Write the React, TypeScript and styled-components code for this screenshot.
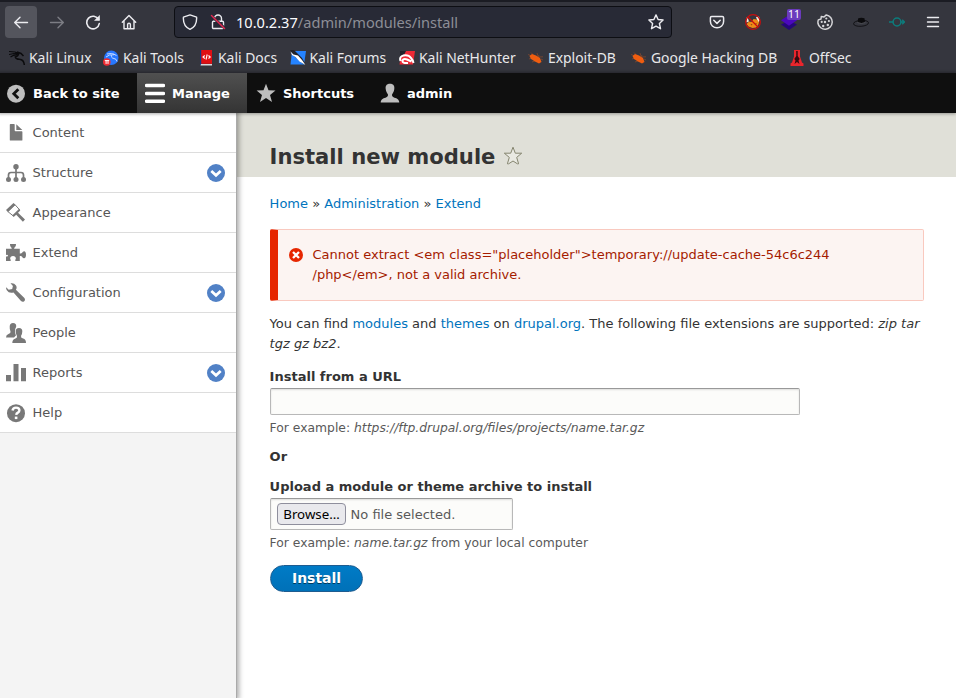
import React from 'react';
import styled, { createGlobalStyle } from 'styled-components';

const GlobalStyle = createGlobalStyle`
  *, *::before, *::after { box-sizing: border-box; }
  body { margin: 0; background: #fff; overflow: hidden; }
  svg { display: block; flex: none; }
`;

const Page = styled.div`
  display: flex;
  flex-direction: column;
  width: 956px;
  height: 698px;
  font: 13px/20px "DejaVu Sans", sans-serif;
  color: #333;
`;

/* ---------- browser chrome ---------- */

const Chrome = styled.header`
  flex: none;
  height: 73px;
  border-top: 2px solid #1b1c23;
  background: #35363e;
  font-family: "Noto Sans", sans-serif;
  color: #e9e9eb;
`;

const NavBar = styled.div`
  display: flex;
  align-items: center;
  height: 40px;
  padding-left: 5px;
`;

const NavButton = styled.div<{ $active?: boolean }>`
  display: grid;
  place-items: center;
  flex: none;
  width: 32px;
  height: 32px;
  margin-right: 4px;
  border-radius: 4px;
  background: ${(p) => (p.$active ? '#54555d' : 'transparent')};
`;

const AddressBar = styled.div`
  display: flex;
  align-items: center;
  flex: none;
  width: 498px;
  height: 32px;
  margin: 0 29px 0 25px;
  padding: 0 6px;
  border: 1px solid #0d0e13;
  border-radius: 4px;
  background: #282a36;
`;

const AddressIcon = styled.span`
  display: grid;
  place-items: center;
  width: 18px;
  margin-right: 10px;
  &:last-child { margin: 0; }
`;

const Url = styled.span`
  flex: 1;
  margin-left: -1px;
  font-size: 14.6px;
  line-height: 20px;
  color: #8d8e97;
  b { font-weight: 400; color: #fbfbfe; }
`;

const Extension = styled.div`
  position: relative;
  display: grid;
  place-items: center;
  flex: none;
  width: 32px;
  height: 32px;
  margin-right: 4px;
`;

const CountBadge = styled.span`
  position: absolute;
  top: 3px;
  left: 14px;
  width: 14px;
  height: 11px;
  border-radius: 2px;
  background: #6b3bbd;
  color: #fff;
  font-size: 10.5px;
  line-height: 11px;
  text-align: center;
`;

const Bookmarks = styled.nav`
  display: flex;
  align-items: center;
  gap: 12px;
  height: 31px;
  padding: 1px 0 0 9px;
`;

const Bookmark = styled.a<{ $width: number }>`
  display: flex;
  align-items: center;
  gap: 4px;
  width: ${(p) => p.$width}px;
  flex: none;
  font-size: 13.9px;
  line-height: 20px;
  white-space: nowrap;
`;

/* ---------- admin toolbar ---------- */

const AdminBar = styled.nav`
  display: flex;
  flex: none;
  height: 40px;
  background: #0f0f0f;
  color: #fff;
  font-weight: 700;
  position: relative;
  z-index: 2;
  box-shadow: -1px 0 3px 1px rgba(0, 0, 0, 0.333);
`;

const AdminTab = styled.a<{ $width: number; $inset?: number; $active?: boolean }>`
  display: flex;
  align-items: center;
  gap: 7px;
  width: ${(p) => p.$width}px;
  padding-left: ${(p) => p.$inset ?? 6}px;
  background: ${(p) => (p.$active ? 'linear-gradient(#505050, #343434)' : 'none')};
  span { padding-top: 2px; }
`;

const Body = styled.div`
  display: flex;
  flex: 1;
  min-height: 0;
`;

const Tray = styled.aside`
  flex: none;
  width: 237px;
  border-right: 1px solid #aaa;
  background: #f4f4f4;
  box-shadow: 0 0 5px 2px rgba(0, 0, 0, 0.333);
  z-index: 1;
`;

const TrayItem = styled.a`
  display: flex;
  align-items: center;
  gap: 6.6px;
  height: 40px;
  padding: 0 11px 0 6px;
  border-bottom: 1px solid #ddd;
  background: #fff;
  color: #565656;
  span { flex: 1; }
`;

/* ---------- content ---------- */

const Main = styled.main`
  flex: 1;
  min-width: 0;
`;

const TitleBar = styled.div`
  display: flex;
  align-items: center;
  gap: 8px;
  height: 64px;
  padding: 22px 0 0 32.6px;
  background: #e0e0d8;
`;

const Title = styled.h1`
  margin: 0;
  padding-top: 2px;
  font-size: 21.1px;
  line-height: 30px;
  font-weight: 700;
`;

const Content = styled.div`
  padding: 17px 32px 0 33px;
`;

const Breadcrumb = styled.nav`
  margin-left: -0.4px;
`;

const Link = styled.a`
  color: #0074bd;
`;

const ErrorMessage = styled.div`
  display: flex;
  gap: 9px;
  width: 654px;
  height: 72px;
  margin-top: 15px;
  padding: 15px 20px 0 11px;
  border: 1px solid #f9c9bf;
  border-left: 8px solid #e62600;
  border-radius: 2px;
  background: #fcf4f2;
  color: #a51b00;
`;

const Intro = styled.p`
  margin: 13px 0 13px -0.4px;
`;

const Label = styled.div<{ $gap?: number }>`
  margin: ${(p) => p.$gap ?? 0}px 0 0 -0.4px;
  font-weight: 700;
`;

const Field = styled.div<{ $width: number; $height: number; $gap?: number }>`
  display: flex;
  align-items: center;
  gap: 4.6px;
  width: ${(p) => p.$width}px;
  height: ${(p) => p.$height}px;
  margin: 1px 0 ${(p) => p.$gap ?? 3}px;
  padding: 0 6px;
  border: 1px solid #b8b8b8;
  border-top-color: #999;
  border-radius: 2px;
  background: #fcfcfa;
  box-shadow: inset 0 1px 2px rgba(0, 0, 0, 0.125);
  color: #595959;
  span { padding-top: 1px; }
`;

const BrowseButton = styled.button`
  width: 69px;
  height: 22px;
  padding: 0;
  border: 1px solid #8f8f9d;
  border-radius: 4px;
  background: #e9e9ed;
  color: #000;
  font: 13.3px/18px "Noto Sans", sans-serif;
`;

const Hint = styled.div`
  margin-left: -0.4px;
  font-size: 12.35px;
  color: #595959;
`;

const InstallButton = styled.button`
  display: block;
  width: 93px;
  height: 27px;
  margin-top: 12px;
  padding: 0;
  border: 1px solid #1e5c90;
  border-radius: 20px;
  background: linear-gradient(#007bc6, #0071b8);
  color: #fff;
  font: 700 13.9px/23px "DejaVu Sans", sans-serif;
  text-shadow: 0 1px rgba(0, 0, 0, 0.5);
`;

/* ---------- icons ---------- */

const stroke = {
  fill: 'none',
  stroke: '#ececf0',
  strokeWidth: 1.4,
  strokeLinecap: 'round' as const,
  strokeLinejoin: 'round' as const,
};

const Icon = ({ size = 16, children }: { size?: number; children: React.ReactNode }) => (
  <svg width={size} height={size} viewBox={`0 0 ${size} ${size}`}>{children}</svg>
);

const BackIcon = () => <Icon><path {...stroke} d="M14.5 8.500H1.8M7 3.3 1.7 8.500 7 13.7" /></Icon>;
const ForwardIcon = () => <Icon><path {...stroke} stroke="#7c7d84" d="M1.5 8.500h12.7M9 3.3 14.3 8.500 9 13.7" /></Icon>;
const ReloadIcon = () => (
  <Icon>
    <path {...stroke} strokeWidth="1.600" d="M13.6 5.500A6.3 6.3 0 1 0 14.3 9.500" />
    <path fill="#ececf0" d="M14.8 1v5.8H9z" />
  </Icon>
);
const HomeIcon = () => (
  <Icon><path {...stroke} d="M1.300 8.300 8 1.600 14.700 8.300M3 7v7.700h10V7M6.600 14.500V10.500q0-1.200 1.400-1.200t1.400 1.200v4" /></Icon>
);
const ShieldIcon = () => (
  <Icon><path {...stroke} d="M8 .9 14.600 3.200c.3 5-1.500 9.800-6.600 12.100C2.900 13 1.100 8.200 1.400 3.200z" /></Icon>
);
const LockIcon = () => (
  <Icon>
    <path {...stroke} d="M4.500 7V4.500a3.500 3.500 0 0 1 7 0V7M3.500 7.200h9a1 1 0 0 1 1 1v5.300a1 1 0 0 1-1 1h-9a1 1 0 0 1-1-1V8.200a1 1 0 0 1 1-1z" />
    <path stroke="#282a36" strokeWidth="3" d="M2 2.500 14.500 14" />
    <path stroke="#e22850" strokeWidth="1.500" strokeLinecap="round" d="M1.500 1.500 14.500 14.500" />
  </Icon>
);
const BookmarkStar = () => (
  <Icon><path {...stroke} d="M8 .9l2.100 4.600 5 .5-3.700 3.500 1.100 5.200L8 12.100l-4.500 2.600 1.100-5.200L.9 6l5-.5z" /></Icon>
);
const PocketIcon = () => (
  <Icon>
    <path {...stroke} strokeWidth="1.500" d="M2.700 2.500h10.600q1.300 0 1.300 1.300V7.500a6.600 6.300 0 0 1-13.200 0V3.800q0-1.300 1.300-1.300zM4.800 6.300 8 9.400l3.200-3.100" />
  </Icon>
);
const FoxIcon = () => (
  <Icon>
    <path fill="#f5ead8" d="m1 3.500 2 1 1 3-2.500 1zM11 3l3-.500 1 4-2 2z" />
    <path fill="#ef8a18" d="m4 7.500 2.500.500L8.500 5l3.500.5 2 3-1 3L11 13.500l-3.500 .5-4-1.500L1.500 10z" />
    <path fill="#7d3c13" d="m5.500 10 2 .5-1 1zM10.500 9l1.500 .5-1.500 1z" />
    <circle cx="8" cy="8" r="7.300" fill="none" stroke="#c90d0d" strokeWidth="1.300" />
    <path d="m3 3 10 10" stroke="#c90d0d" strokeWidth="1.300" />
  </Icon>
);
const LayersIcon = () => (
  <Icon>
    <path fill="#25077a" d="m0 10.500 8-4 8 4L8 16z" />
    <path fill="#4b08bd" d="M0 6.300 8 1l8 5.300-8 5.500z" />
  </Icon>
);
const CookieIcon = () => (
  <Icon>
    <path {...stroke} strokeWidth="1.500" stroke="#d5d5d8" d="M9.300.9A7.200 7.200 0 1 1 1 9.500C.8 8 .9 7 1.300 5.900L4 5l.3-2.500L7 3z" />
    <g fill="#d5d5d8">
      <circle cx="8" cy="8" r="1.200" /><circle cx="4.700" cy="7.900" r="1.100" /><circle cx="9.300" cy="4.500" r="1.100" />
      <circle cx="11.900" cy="7" r="1.100" /><circle cx="10.800" cy="11" r="1.200" /><circle cx="6.200" cy="12" r="1.200" />
    </g>
  </Icon>
);
const HatIcon = () => (
  <Icon>
    <ellipse cx="8" cy="9.300" rx="7.500" ry="3" fill="none" stroke="#0b0b0d" strokeWidth=".8" transform="rotate(-4 8 9)" />
    <path fill="#0b0b0d" d="M4.800 8.500 5 4.500q3-1.300 6.500-.2l.5 4.200q-3.500 2-7.200 0z" />
    <path stroke="#5b5c62" strokeWidth=".8" d="M4.500 8.500q4 2 7.800 0" fill="none" />
  </Icon>
);
const ProxyIcon = () => (
  <Icon>
    <circle cx="8" cy="8" r="3.900" fill="none" stroke="#0d7c7c" strokeWidth="1.500" />
    <path fill="none" stroke="#0d7c7c" strokeWidth="1.400" d="M0 8h4M12 8h3.500M13.200 5.800 15.400 8l-2.200 2.200" />
  </Icon>
);
const MenuIcon = () => <Icon><path {...stroke} d="M2.500 3.500h11M2.500 8h11M2.500 12.500h11" /></Icon>;

const KaliLinuxIcon = () => (
  <Icon>
    <path fill="none" stroke="#0b0b0d" strokeWidth="1.100" d="M0 1.500 6 2l3 1M0 4.500 5 3.500l4 .8M1.500 7Q5 4.500 8.500 5" />
    <path fill="none" stroke="#0b0b0d" strokeWidth="1.500" d="M6 3q4 0 3.500 1.500T6.300 7q.7 2.300 4 2.300 4.700.3 5 5.700M8 2l4 1.500 2.500 2.500" />
  </Icon>
);
const KaliToolsIcon = () => (
  <Icon>
    <circle cx="8.300" cy="7.800" r="7.200" fill="#2777ff" />
    <path fill="none" stroke="#d6e4ff" strokeWidth=".9" d="M4 4q5-1.500 7 1M3 7q4-3 6-2-1.500 3 2 3.500 2.500.2 3 3M9.500 3.500l4 2" />
    <circle cx="3.800" cy="12" r="3.800" fill="#f02a31" />
    <path stroke="#fff" strokeWidth="1" d="M1.800 10.600h4.400M3.100 10.600v3.300M5 10.600v3.300" />
  </Icon>
);
const KaliDocsIcon = () => (
  <Icon>
    <path fill="#123b80" d="M2 0h3v15H2z" />
    <path fill="#e00f14" d="M3.200 0H14v13.800H3.200z" />
    <path fill="#d8d8dc" d="M3 14h11v1.500H2.500z" />
    <path fill="none" stroke="#fff" strokeWidth="1.100" d="M6.800 5.500 5 7l1.800 1.500M9.200 4.500 8 9.500M10.500 5.500 12.200 7l-1.700 1.500" />
  </Icon>
);
const KaliForumsIcon = () => (
  <Icon>
    <path fill="#2583ff" d="M2 1h14l-2 13.500H.5z" />
    <path fill="#20222a" d="M0 0h4l8 8 4 7-4-2-9-8z" />
    <path fill="#fff" d="m.5 1.500 3 3L8 5.500l4 4.500 3.500 5-6-3.500-4-4.500L2 5z" />
  </Icon>
);
const NetHunterIcon = () => (
  <Icon>
    <path fill="#ee2935" d="M2.500 1H16l-2 13.500H.5z" />
    <path fill="#20222a" d="M1 1h6L5.500 4 1 7z" />
    <path fill="none" stroke="#fff" strokeWidth="2" d="M1.500 11Q0 6.500 4.500 5.500q5-1 7.500 2.500 2 2 2.500 5M9 13q-6 .5-5.500-2.500Q4.500 8.300 8 9.500l4.500 2" />
  </Icon>
);
const BugIcon = () => (
  <Icon>
    <path fill="none" stroke="#8b4a2b" strokeWidth=".7" d="M0 4.500 4 6M3 2.500l2 2M9 3 10 6M11 5l-1 2 5-.2M1 9l3-1M4 12l4-1.500M13 9l2 1" />
    <path fill="#ef5d10" d="M1.500 6 4 4l4 1.500 4 2.500 1.500 4-2.500 1.500-4-2L3 9z" />
  </Icon>
);
const OffSecIcon = () => (
  <Icon>
    <path fill="#e9252c" d="M5 0h6v6.500l2 6 1.500 1V16h-13v-2.500l1.500-1 2-6z" />
    <path fill="#350b10" d="M7.200 1h1.500v5l2 3-1.200 1.500 1 3.500L8 12l-2.500 2 1-3.500L5.300 9l2-3z" />
  </Icon>
);

const BackToSiteIcon = () => (
  <Icon size={20}>
    <circle cx="10" cy="10.700" r="9" fill="#bebebe" />
    <path d="M12.300 6.200 7.800 10.700l4.500 4.500" fill="none" stroke="#0f0f0f" strokeWidth="2.800" />
  </Icon>
);
const HamburgerIcon = () => (
  <Icon size={20}><path d="M1.500 2.500h17M1.500 10.500h17M1.500 18.200h17" stroke="#fff" strokeWidth="3.400" strokeLinecap="round" /></Icon>
);
const ShortcutIcon = () => (
  <Icon size={20}><path fill="#bebebe" d="m10 .8 2.500 6.500 7 .2-5.500 4.400 2 7.100-6-4-6 4 2-7.100L.6 7.500l6.900-.2z" /></Icon>
);
const UserIcon = () => (
  <Icon size={20}>
    <path fill="#bebebe" d="M10 .8c3.500 0 4.700 2.200 4.300 5.200-.3 2.500-1.200 3.800-2.200 5.300-.3 1.700.2 2.700 2.400 3.400 2.700.8 4.400 1.300 4.800 4.800H.700c.4-3.500 2.100-4 4.800-4.800 2.200-.7 2.700-1.700 2.400-3.400C6.900 9.800 6 8.500 5.700 6 5.300 3 6.500.8 10 .8z" />
  </Icon>
);

const grey = '#787878';
const FileIcon = () => (
  <Icon size={20}><path fill={grey} d="M4.500 1H8q.7 0 .7.700v5.800q0 .7.700.700h6.300q.7 0 .7.700v8q0 .7-.7.700H4.500q-.7 0-.7-.7V1.700q0-.7.700-.7zM10.300 1.200l6 5.900h-6z" /></Icon>
);
const StructureIcon = () => (
  <Icon size={20}>
    <path fill="none" stroke={grey} strokeWidth="1.700" d="M10 4v12M2.500 16v-4q0-2.500 2.500-2.500h10q2.500 0 2.500 2.500v4" />
    <g fill={grey}>
      <circle cx="10" cy="3.700" r="2.700" /><circle cx="2.500" cy="16.500" r="2.500" />
      <circle cx="10" cy="16.500" r="2.500" /><circle cx="17.500" cy="16.500" r="2.500" />
    </g>
  </Icon>
);
const AppearanceIcon = () => (
  <Icon size={20}>
    <path fill={grey} d="m7.500 0 2 1.800L2 9 0 7z" />
    <path fill="none" stroke={grey} strokeWidth="1" d="m9 1.700 4.600 5.100-6.500 6L1.800 8.500z" />
    <path fill={grey} d="m13.200 5.800 1.100 1.600L12 9.800l7 6.600-2.100 2.300-6.700-6.900-2.500 2.300-1.500-1.500z" />
  </Icon>
);
const ExtendIcon = () => (
  <Icon size={20}>
    <path fill={grey} d="M0 5.700h5.700Q5.900 4.700 4.800 3.900 3.900 3.200 4 .9h6q0 2.300-1 3-1 .8-.8 1.800h5.600v4.700q1.600.4 2.300-.6.7-1.500 2-1.500 1.900.2 1.900 3.400t-1.900 3.500q-1.300 0-2-1.500-.7-1-2.300-.6v5H9.500q-.6-1 .3-2 .3-3-2.800-3.100-3.100.1-2.800 3.100.9 1 .3 2H0v-4.700q1.800.6 2-.6 0-1.400-2-.8z" />
  </Icon>
);
const WrenchIcon = () => (
  <Icon size={20}>
    <path fill={grey} d="M4.500.300Q8-.5 10 2.500q1.300 2-.1 4.300l8.500 8.300q1.300 2-.2 3.200-1.600 1.200-3.200-.3L7.500 9.500Q3 10.800.8 7.300-.2 5.500.2 4.200l2.500 2.600 3.500-.700.700-3z" />
  </Icon>
);
const PeopleIcon = () => (
  <Icon size={20}>
    <path fill={grey} d="M7 0q3.500 0 3.200 3.700Q9 5 9.500 7.800q0 1.800 1.500 3.500l-3 3.200H0q0-3 2.500-3.600 2.500-.5 2-2.300Q3.500 6.500 3.700 3.500 3.800 0 7 0z" />
    <path fill={grey} stroke="#fff" strokeWidth="1.400" paintOrder="stroke" d="M13 5q3.500 0 3.300 3.500 0 2.300-1.300 4.500-.3 2 2.200 2.600Q20 16.300 20 20H6.300q0-3.500 2.700-4.300 2.500-.7 2-2.700-1.200-2.200-1.300-4.500Q9.500 5 13 5z" />
  </Icon>
);
const ReportsIcon = () => (
  <Icon size={20}><path fill={grey} d="M0 12h5v6.300H0zM7.500 1h5v17.300h-5zM15 5h5v13.300h-5z" /></Icon>
);
const HelpIcon = () => (
  <Icon size={20}>
    <circle cx="10" cy="10.200" r="9" fill={grey} />
    <path d="M6.500 7.500Q7 4.600 10 4.600q3.400 0 3.400 2.700 0 1.500-1.500 2.300-1.500.8-1.700 2.200" fill="none" stroke="#fff" strokeWidth="2.400" />
    <path fill="#fff" d="M8.800 13.600h2.600v2.500H8.800z" />
  </Icon>
);
const ExpandIcon = () => (
  <Icon size={18}>
    <circle cx="9" cy="9" r="9" fill="#5181c6" />
    <path d="m4.300 7 4.700 4.300L13.700 7" fill="none" stroke="#fff" strokeWidth="2.700" />
  </Icon>
);
const TitleStarIcon = () => (
  <Icon size={20}>
    <path fill="#e9e9e2" stroke="#85856f" strokeWidth="1" strokeLinejoin="round" d="m10 1.200 2.300 6h6.400l-5 4.200 1.900 6.400h-1.200L10 15l-4.400 2.800H4.400l1.900-6.400-5-4.200h6.400z" />
  </Icon>
);
const ErrorIcon = () => (
  <Icon size={14}>
    <circle cx="7" cy="7" r="7" fill="#e62600" />
    <path d="m4 4 6 6M10 4l-6 6" stroke="#fff" strokeWidth="2.300" />
  </Icon>
);

const ErrorIconSlot = styled.span`
  padding: 3px 0 0;
  margin-right: 0.5px;
`;

const bookmarks = [
  { label: 'Kali Linux', icon: KaliLinuxIcon, width: 82 },
  { label: 'Kali Tools', icon: KaliToolsIcon, width: 83 },
  { label: 'Kali Docs', icon: KaliDocsIcon, width: 79.5 },
  { label: 'Kali Forums', icon: KaliForumsIcon, width: 97.5 },
  { label: 'Kali NetHunter', icon: NetHunterIcon, width: 117 },
  { label: 'Exploit-DB', icon: BugIcon, width: 91 },
  { label: 'Google Hacking DB', icon: BugIcon, width: 146 },
  { label: 'OffSec', icon: OffSecIcon, width: 64 },
];

const trayItems = [
  { label: 'Content', icon: FileIcon },
  { label: 'Structure', icon: StructureIcon, expandable: true },
  { label: 'Appearance', icon: AppearanceIcon },
  { label: 'Extend', icon: ExtendIcon },
  { label: 'Configuration', icon: WrenchIcon, expandable: true },
  { label: 'People', icon: PeopleIcon },
  { label: 'Reports', icon: ReportsIcon, expandable: true },
  { label: 'Help', icon: HelpIcon },
];

export default function App() {
  return (
    <Page>
      <GlobalStyle />
      <Chrome>
        <NavBar>
          <NavButton $active><BackIcon /></NavButton>
          <NavButton><ForwardIcon /></NavButton>
          <NavButton><ReloadIcon /></NavButton>
          <NavButton><HomeIcon /></NavButton>
          <AddressBar>
            <AddressIcon><ShieldIcon /></AddressIcon>
            <AddressIcon><LockIcon /></AddressIcon>
            <Url><b>10.0.2.37</b>/admin/modules/install</Url>
            <AddressIcon><BookmarkStar /></AddressIcon>
          </AddressBar>
          <Extension><PocketIcon /></Extension>
          <Extension><FoxIcon /></Extension>
          <Extension><LayersIcon /><CountBadge>11</CountBadge></Extension>
          <Extension><CookieIcon /></Extension>
          <Extension><HatIcon /></Extension>
          <Extension><ProxyIcon /></Extension>
          <Extension><MenuIcon /></Extension>
        </NavBar>
        <Bookmarks>
          {bookmarks.map(({ label, icon: Glyph, width }) => (
            <Bookmark key={label} $width={width}><Glyph />{label}</Bookmark>
          ))}
        </Bookmarks>
      </Chrome>

      <AdminBar>
        <AdminTab $width={137}><BackToSiteIcon /><span>Back to site</span></AdminTab>
        <AdminTab $width={110} $inset={8} $active><HamburgerIcon /><span>Manage</span></AdminTab>
        <AdminTab $width={127} $inset={9}><ShortcutIcon /><span>Shortcuts</span></AdminTab>
        <AdminTab $width={100}><UserIcon /><span>admin</span></AdminTab>
      </AdminBar>

      <Body>
        <Tray>
          {trayItems.map(({ label, icon: Glyph, expandable }) => (
            <TrayItem key={label}>
              <Glyph />
              <span>{label}</span>
              {expandable && <ExpandIcon />}
            </TrayItem>
          ))}
        </Tray>
        <Main>
          <TitleBar>
            <Title>Install new module</Title>
            <TitleStarIcon />
          </TitleBar>
          <Content>
            <Breadcrumb>
              <Link>Home</Link> » <Link>Administration</Link> » <Link>Extend</Link>
            </Breadcrumb>
            <ErrorMessage>
              <ErrorIconSlot><ErrorIcon /></ErrorIconSlot>
              <div>
                Cannot extract &lt;em class="placeholder"&gt;temporary://update-cache-54c6c244<br />
                /php&lt;/em&gt;, not a valid archive.
              </div>
            </ErrorMessage>
            <Intro>
              You can find <Link>modules</Link> and <Link>themes</Link> on <Link>drupal.org</Link>. The following file
              extensions are supported: <em>zip tar<br />tgz gz bz2</em>.
            </Intro>
            <Label>Install from a URL</Label>
            <Field $width={530} $height={27} />
            <Hint>For example: <em>https://ftp.drupal.org/files/projects/name.tar.gz</em></Hint>
            <Label $gap={9}>Or</Label>
            <Label $gap={10}>Upload a module or theme archive to install</Label>
            <Field $width={243} $height={32}>
              <BrowseButton>Browse…</BrowseButton>
              <span>No file selected.</span>
            </Field>
            <Hint>For example: <em>name.tar.gz</em> from your local computer</Hint>
            <InstallButton>Install</InstallButton>
          </Content>
        </Main>
      </Body>
    </Page>
  );
}
